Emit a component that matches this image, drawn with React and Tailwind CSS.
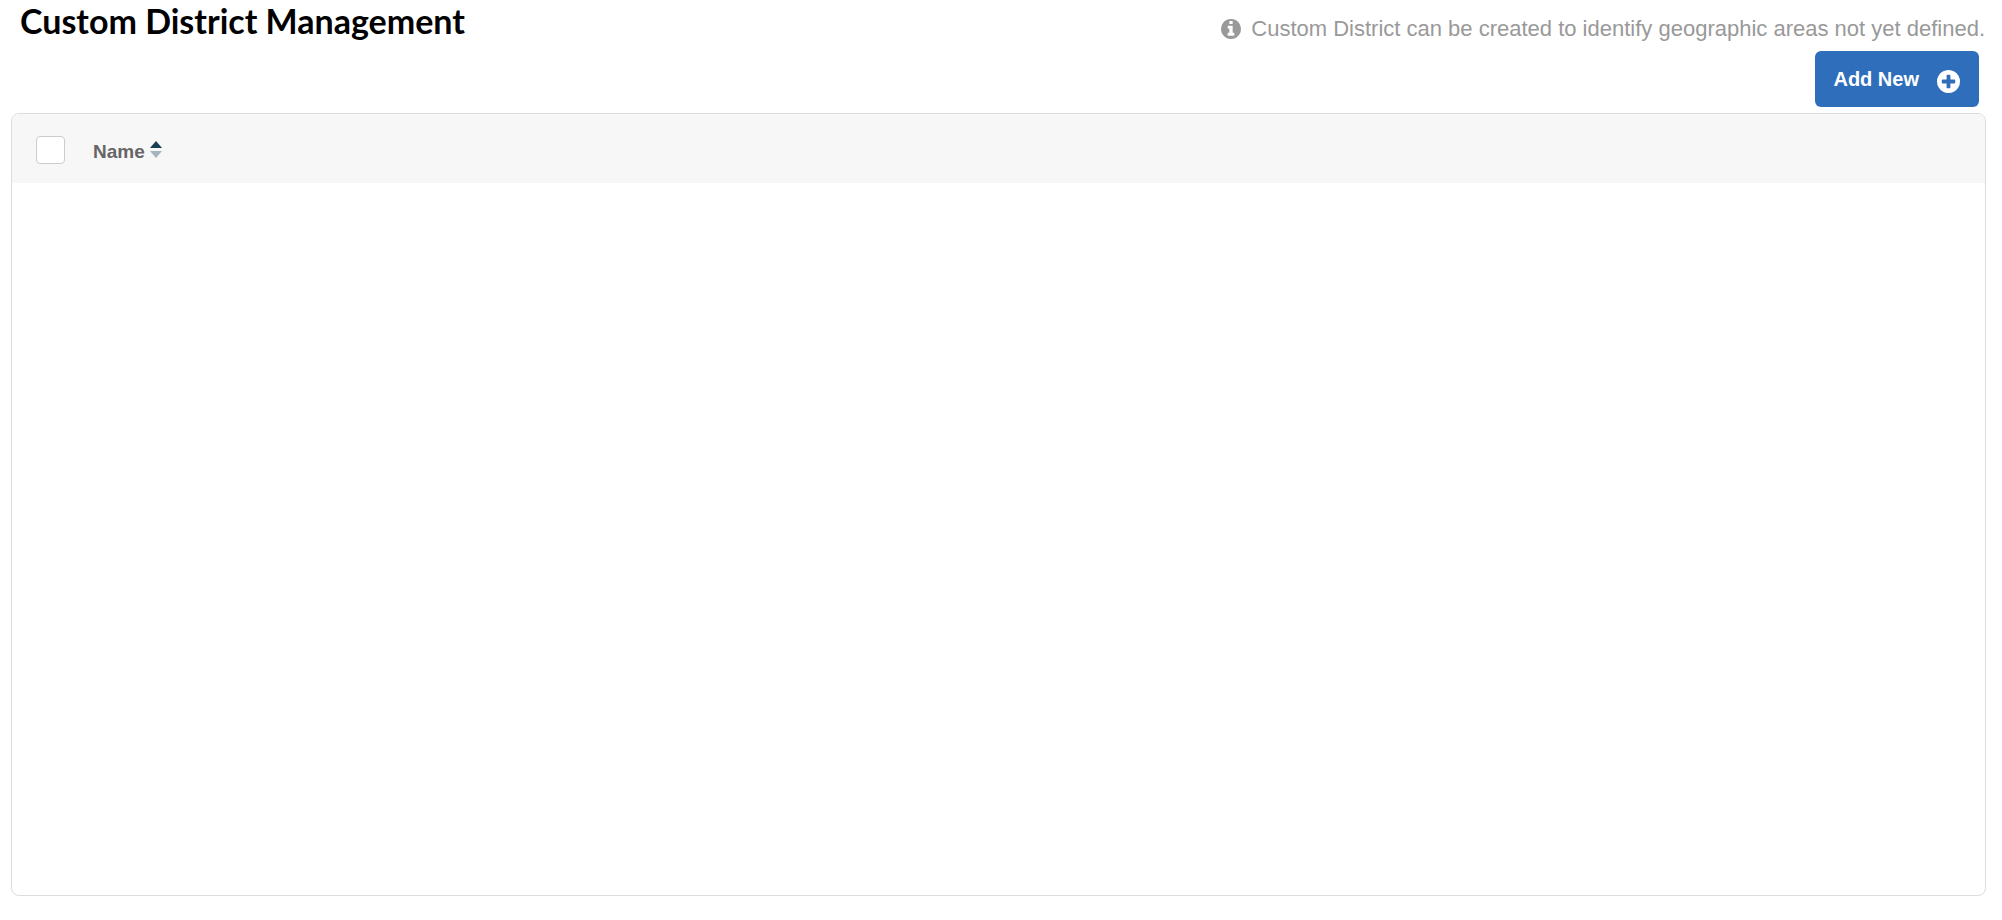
import { useState } from 'react'

const InfoIcon = () => (
  <svg width="20" height="20" viewBox="128 128 1536 1536" fill="currentColor" aria-hidden="true">
    <path d="M1152 1376v-160q0-14-9-23t-23-9h-96v-512q0-14-9-23t-23-9h-320q-14 0-23 9t-9 23v160q0 14 9 23t23 9h96v320h-96q-14 0-23 9t-9 23v160q0 14 9 23t23 9h448q14 0 23-9t9-23zM1024 480v-160q0-14-9-23t-23-9h-192q-14 0-23 9t-9 23v160q0 14 9 23t23 9h192q14 0 23-9t9-23zM1664 896q0 209-103 385.5t-279.5 279.5-385.5 103-385.5-103-279.5-279.5-103-385.5 103-385.5 279.5-279.5 385.5-103 385.5 103 279.5 279.5 103 385.5z" />
  </svg>
)

const PlusIcon = () => (
  <svg className="mt-1" width="23" height="23" viewBox="128 128 1536 1536" fill="currentColor" aria-hidden="true">
    <path d="M1344 960v-128q0-26-19-45t-45-19h-256v-256q0-26-19-45t-45-19h-128q-26 0-45 19t-19 45v256h-256q-26 0-45 19t-19 45v128q0 26 19 45t45 19h256v256q0 26 19 45t45 19h128q26 0 45-19t19-45v-256h256q26 0 45-19t19-45zM1664 896q0 209-103 385.5t-279.5 279.5-385.5 103-385.5-103-279.5-279.5-103-385.5 103-385.5 279.5-279.5 385.5-103 385.5 103 279.5 279.5 103 385.5z" />
  </svg>
)

const SortIcon = ({ direction }) => (
  <svg className="mb-[2px]" width="12" height="17" viewBox="0 0 12 17" aria-hidden="true">
    <path d="M6 0L12 7H0Z" fill={direction === 'asc' ? '#173f55' : '#a6b4bd'} />
    <path d="M0 10H12L6 17Z" fill={direction === 'desc' ? '#173f55' : '#a6b4bd'} />
  </svg>
)

const PageHeader = () => (
  <header className="flex h-[51px] items-start justify-between pl-5 pr-[17px]">
    <h1 className="pt-1 font-[Lato,sans-serif] text-[34px] font-bold leading-[34px] text-black">
      Custom District Management
    </h1>
    <p className="flex items-center gap-[10px] pt-4 text-[22px] leading-[26px] text-[#999999]">
      <InfoIcon />
      Custom District can be created to identify geographic areas not yet defined.
    </p>
  </header>
)

const CustomDistrictManagement = () => {
  const [direction, setDirection] = useState('asc')
  const [allSelected, setAllSelected] = useState(false)

  const toggleSort = () => setDirection(direction === 'asc' ? 'desc' : 'asc')

  return (
    <div className="flex min-h-screen flex-col bg-white pb-6 font-['Liberation_Sans',Arial,sans-serif]">
      <PageHeader />

      <div className="flex justify-end pr-[23px]">
        <button
          type="button"
          className="flex h-14 items-center gap-[18px] rounded-md bg-[#2f6ebb] pl-[18px] pr-[19px] text-[20px] font-bold text-white"
        >
          Add New
          <PlusIcon />
        </button>
      </div>

      <main className="ml-[11px] mr-4 mt-[6px] flex-1 overflow-hidden rounded-lg border border-[#dddddd] bg-white">
        <table className="w-full text-left">
          <thead className="bg-[#f7f7f7]">
            <tr className="h-[69px]">
              <th className="w-[81px] pl-6 pt-[2px]">
                <input
                  type="checkbox"
                  aria-label="Select all districts"
                  checked={allSelected}
                  onChange={e => setAllSelected(e.target.checked)}
                  className="block h-7 w-[29px] appearance-none rounded border border-[#cccccc] bg-white checked:bg-[#2f6ebb]"
                />
              </th>
              <th className="pt-1">
                <button
                  type="button"
                  onClick={toggleSort}
                  className="flex items-center gap-[5px] text-[19px] font-bold text-[#666666]"
                >
                  <span className="pt-1">Name</span>
                  <SortIcon direction={direction} />
                </button>
              </th>
            </tr>
          </thead>
          <tbody />
        </table>
      </main>
    </div>
  )
}

export default CustomDistrictManagement
